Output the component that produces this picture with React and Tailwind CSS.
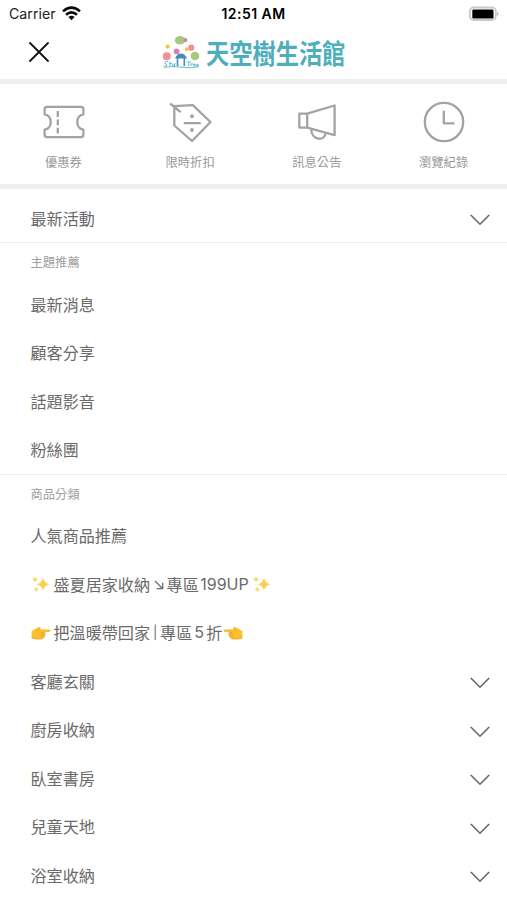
import React from "react";

const cjk = "font-['Noto_Sans_CJK_TC',sans-serif]";

function Chevron() {
  return (
    <svg width="22" height="14" viewBox="0 0 22 14" fill="none" stroke="#666" strokeWidth="1.6" className="mt-[5px]">
      <path d="M1.8 2 11 11.2 20.2 2" />
    </svg>
  );
}

function Row({ children, arrow }) {
  return (
    <div className="flex h-[48.5px] shrink-0 items-center justify-between pr-4 pl-[30.5px] text-[16.1px] leading-6 text-[#6a6a6a]">
      <div className="flex items-center whitespace-nowrap">{children}</div>
      {arrow && <Chevron />}
    </div>
  );
}

function Label({ children }) {
  return <div className="flex h-[37.5px] shrink-0 items-center border-t border-[#eee] pt-[2px] pl-[30.5px] text-[12.3px] text-[#a0a0a0]">{children}</div>;
}

function Sparkles() {
  return (
    <svg width="20" height="20" viewBox="0 0 20 20" className="shrink-0">
      <path fill="#fbd04e" d="M12 3.2Q12.9 9.2 18.8 10.2Q12.9 11.2 12 17.2Q11.1 11.2 5.4 10.2Q11.1 9.2 12 3.2Z" />
      <path fill="#fbd768" d="M4 2.2Q4.5 5 7 5.5Q4.5 6 4 8.6Q3.5 6 1 5.5Q3.5 5 4 2.2ZM5.3 12.6Q5.7 15 8 15.4Q5.7 15.9 5.3 18.2Q4.8 15.9 2.7 15.4Q4.8 15 5.3 12.6Z" />
    </svg>
  );
}

function Hand({ flip }) {
  return (
    <svg width="20" height="16" viewBox="0 0 20 16" className={flip ? "mt-[2px] shrink-0 -scale-x-100" : "mt-[2px] shrink-0"}>
      <path fill="#fbc02f" d="M.6 6.2Q4 4 6.2 2.7Q8.2 1.4 9.5 2.2Q10.3 3 9 4.2L18.4 4.4Q19.7 4.7 19.6 5.8Q19.4 6.8 18 6.9L13.7 7.2Q14.6 7.8 14.3 8.8Q14.8 10.2 13.8 10.9Q13.9 12.2 12.7 12.6Q12.2 14 10.6 14H5.3Q3.2 14 .6 12.8Z" />
      <path fill="none" stroke="#e89a1c" strokeWidth=".7" strokeLinecap="round" d="M9 4.4 7 6M13.6 7.3H10.4M14 9.1H10.2M13.6 11H9.8M12.5 12.8Q12 14 10.6 14H5.3Q3.2 14 .8 12.9" />
    </svg>
  );
}

function Logo() {
  return (
    <svg width="40" height="36" viewBox="0 0 40 36" className="shrink-0">
      <ellipse cx="18" cy="6.3" rx="5.2" ry="4.3" fill="#a9c87e" />
      <circle cx="23.3" cy="6.2" r="2.1" fill="#dc80b4" />
      <circle cx="5.7" cy="12.6" r="2.1" fill="#ebc83f" />
      <circle cx="4.8" cy="22.3" r="4" fill="#ee9294" />
      <circle cx="14.6" cy="17.4" r="2.9" fill="#d780b7" />
      <circle cx="24.7" cy="15.2" r="1.9" fill="#ebc83f" />
      <circle cx="29.2" cy="13.7" r="3.1" fill="#ee9294" />
      <circle cx="33" cy="22" r="4.3" fill="#a9c87e" />
      <path d="M13 24.5Q15 19.5 19 19.5T25 24.5Z" fill="#438fb0" />
      <path d="M15.5 24V32M22.3 24V32" fill="none" stroke="#438fb0" strokeWidth="1.6" />
      <path d="M6.4 27.8Q2.5 27 2.7 29.3Q5.8 30 4.5 32Q2.5 33 1.5 31.8M8 27.5V32.3M7 29.5H10M10.8 29.5V31.8Q12.3 32.5 13 29.5L12 34M24.6 28H29M26.8 28V32.5M29 32V29.8L31 30M31.3 31H33.3Q33 29 31.6 30.2Q31.2 32.5 33.6 32M34.3 31.3H36.2Q35.6 29 34.5 30.6Q34.3 32.4 36.8 32M2 33.3Q12 31.7 20 33.2T37 32.6" fill="none" stroke="#5bb7c4" strokeWidth="0.9" />
    </svg>
  );
}

function Shortcut({ label, children }) {
  return (
    <div className="flex flex-col items-center pt-[15px] text-[12.3px] leading-5 text-[#999]">
      <svg width="46" height="46" viewBox="0 0 46 46" fill="none" stroke="#a3a3a3" strokeWidth="2.3" strokeLinejoin="round">
        {children}
      </svg>
      <span className="mt-[7px]">{label}</span>
    </div>
  );
}

export default function App() {
  return (
    <div className={"flex h-[900px] w-[507px] flex-col overflow-hidden bg-white " + cjk}>
      <div className="grid h-[27px] shrink-0 grid-cols-3 items-center px-[9px] font-[Inter,sans-serif] text-black">
        <div className="flex items-center gap-[6px] text-[14.2px] text-[#222]">
          <span>Carrier</span>
          <svg width="19" height="15" viewBox="0 0 19 15" fill="none" stroke="#080808" strokeWidth="2.5">
            <path d="M1 5.4Q9.5-2.2 18 5.4M4 8.8Q9.5 3.9 15 8.8" />
            <path d="M6.4 11.1Q9.5 8.4 12.6 11.1L9.5 14.3Z" fill="#080808" stroke="none" />
          </svg>
        </div>
        <div className="text-center text-[14px] font-semibold tracking-[0.45px]">12:51 AM</div>
        <div className="flex justify-end">
          <svg width="32" height="16" viewBox="0 0 32 16" className="mr-[-2px]">
            <rect x="1.8" y="1.5" width="26" height="12.5" rx="4" fill="#fff" stroke="#c9c9c9" strokeWidth="1.8" />
            <rect x="4.3" y="3.5" width="21.2" height="8.9" rx="1.2" fill="#000" />
            <path d="M29.2 5.5Q31.5 7.8 29.2 10.1Z" fill="#aaa" />
          </svg>
        </div>
      </div>
      <div className="flex h-[52px] shrink-0 items-center">
        <svg width="22" height="22" viewBox="0 0 22 22" stroke="#111" strokeWidth="1.8" strokeLinecap="round" className="-mt-[2px] ml-7">
          <path d="m2 2 18 18M20 2 2 20" />
        </svg>
        <div className="ml-[112px] flex items-center">
          <span className="-mt-[2px]"><Logo /></span>
          <span className="ml-1 w-[162px] origin-left scale-x-[0.86] text-[27px] leading-[50px] font-bold whitespace-nowrap text-[#4eafbb]">天空樹生活館</span>
        </div>
      </div>
      <div className="h-[5px] shrink-0 bg-[#efefef]" />
      <div className="grid h-[100px] shrink-0 grid-cols-4">
        <Shortcut label="優惠券">
          <path d="M7.2 7.8H40.8Q43.4 7.8 43.4 10.4V15.3C35.2 16.5 35.2 29.5 43.4 30.7V35.6Q43.4 38.2 40.8 38.2H7.2Q4.6 38.2 4.6 35.6V30.7C12.8 29.5 12.8 16.5 4.6 15.3V10.4Q4.6 7.8 7.2 7.8Z" />
          <path d="M17.8 12V18M17.8 20.5V26.2M17.8 28.8V34.5" />
        </Shortcut>
        <Shortcut label="限時折扣">
          <path d="M7.3 7.2 25.8 6.2 43.5 23 25 42 7.3 26.5ZM3.2 4.5 13.6 13.2M16.8 24.2H33.8" />
          <circle cx="25" cy="17.2" r="1.9" fill="#a3a3a3" stroke="none" />
          <circle cx="25" cy="31" r="1.9" fill="#a3a3a3" stroke="none" />
        </Shortcut>
        <Shortcut label="訊息公告">
          <path d="M5.3 14.6H13.2L40.6 6.5V36.2L13.2 28.6H5.3ZM13.2 14.6V28.6M17.2 30.2C17.2 41.7 31.5 42.5 31.5 34" />
        </Shortcut>
        <Shortcut label="瀏覽紀錄">
          <circle cx="23" cy="23" r="19.2" />
          <path d="M22.8 11.7V24.3H33.5" />
        </Shortcut>
      </div>
      <div className="h-[5px] shrink-0 bg-[#efefef]" />
      <div className="flex flex-col pt-[4.5px]">
        <Row arrow>最新活動</Row>
        <Label>主題推薦</Label>
        <Row>最新消息</Row>
        <Row>顧客分享</Row>
        <Row>話題影音</Row>
        <Row>粉絲團</Row>
        <Label>商品分類</Label>
        <Row>人氣商品推薦</Row>
        <Row>
          <Sparkles />
          <span className="ml-[3px]">盛夏居家收納</span>
          <svg width="10" height="10" viewBox="0 0 10 10" fill="none" stroke="currentColor" strokeWidth="1.3" className="mr-[3px] ml-[3.5px] mt-[2px] shrink-0" role="img" aria-label="↘">
            <path d="m1 1 7.5 7.5M2.8 8.7H8.7V2.8" />
          </svg>
          <span>專區</span>
          <span className="ml-[1.5px] w-[50px] font-[Inter,sans-serif] text-base">199UP</span>
          <span className="ml-[2px]"><Sparkles /></span>
        </Row>
        <Row>
          <Hand />
          <span className="ml-[3px]">把溫暖帶回家</span>
          <span className="w-[10px] text-center font-[Inter,sans-serif] text-[13px]">|</span>
          <span>專區</span>
          <span className="w-[14px] text-center font-[Inter,sans-serif]">5</span>
          <span>折</span>
          <span className="ml-[1px]"><Hand flip /></span>
        </Row>
        <Row arrow>客廳玄關</Row>
        <Row arrow>廚房收納</Row>
        <Row arrow>臥室書房</Row>
        <Row arrow>兒童天地</Row>
        <Row arrow>浴室收納</Row>
      </div>
    </div>
  );
}
